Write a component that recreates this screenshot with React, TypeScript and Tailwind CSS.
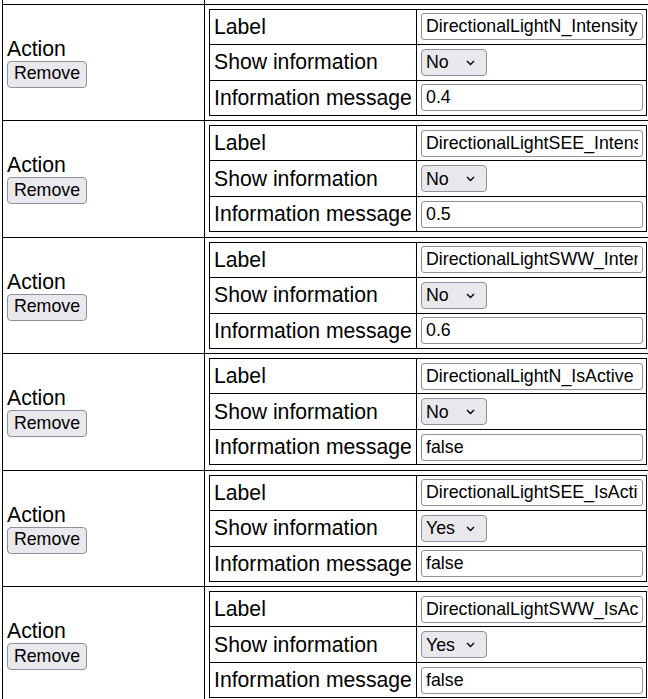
const rows = [
  { label: 'DirectionalLightN_Intensity', show: 'No', message: '0.4' },
  { label: 'DirectionalLightSEE_Intensity', show: 'No', message: '0.5' },
  { label: 'DirectionalLightSWW_Intensity', show: 'No', message: '0.6' },
  { label: 'DirectionalLightN_IsActive', show: 'No', message: 'false' },
  { label: 'DirectionalLightSEE_IsActive', show: 'Yes', message: 'false' },
  { label: 'DirectionalLightSWW_IsActive', show: 'Yes', message: 'false' },
]

function TextInput({ value }: { value: string }) {
  return (
    <input
      type="text"
      defaultValue={value}
      className="block w-[222px] h-[27px] px-[4px] border border-[#8f8f9d] rounded-[3px] bg-white text-[17.8px] text-black outline-none"
    />
  )
}

function YesNo({ value }: { value: string }) {
  return (
    <span className="relative inline-block align-middle">
      <select
        defaultValue={value}
        className="block appearance-none w-[66px] h-[27px] pl-[4px] pr-[20px] border border-[#8f8f9d] rounded-[4px] bg-[#e9e9ed] text-[17.8px] text-black outline-none"
      >
        <option>Yes</option>
        <option>No</option>
      </select>
      <svg
        className="pointer-events-none absolute right-[12px] top-[11px]"
        width="9"
        height="6"
        viewBox="0 0 9 6"
        fill="none"
      >
        <polyline points="1,1 4.5,4.5 8,1" stroke="#000" strokeWidth="1.4" />
      </svg>
    </span>
  )
}

export default function App() {
  return (
    <div className="w-[648px] h-[699px] overflow-hidden bg-white text-black font-['Liberation_Sans',Arial,sans-serif] text-[21.2px] leading-[24px]">
      <table className="ml-[2px] w-[649px] table-fixed border-collapse">
        <colgroup>
          <col className="w-[202px]" />
          <col className="w-[447px]" />
        </colgroup>
        <tbody>
          <tr>
            <td className="h-[4px] p-0 border-x border-b border-black" />
            <td className="h-[4px] p-0 border-x border-b border-black" />
          </tr>
          {rows.map((r) => (
            <tr key={r.label}>
              <td className="border border-black px-[4px] align-middle">
                <div>Action</div>
                <button
                  type="button"
                  className="block w-[80px] h-[27px] border border-[#8f8f9d] rounded-[4px] bg-[#e9e9ed] text-[17.8px] leading-none text-black"
                >
                  Remove
                </button>
              </td>
              <td className="border border-black px-[4px] py-[4.25px]">
                <table className="w-[437px] table-fixed border-collapse">
                  <colgroup>
                    <col className="w-[207px]" />
                    <col className="w-[230px]" />
                  </colgroup>
                  <tbody>
                    <tr>
                      <td className="h-[35px] border border-black px-[4px] whitespace-nowrap">Label</td>
                      <td className="h-[35px] border border-black px-[4px]">
                        <TextInput value={r.label} />
                      </td>
                    </tr>
                    <tr>
                      <td className="h-[36px] border border-black px-[4px] whitespace-nowrap">Show information</td>
                      <td className="h-[36px] border border-black px-[4px]">
                        <YesNo value={r.show} />
                      </td>
                    </tr>
                    <tr>
                      <td className="h-[35px] border border-black px-[4px] whitespace-nowrap">Information message</td>
                      <td className="h-[35px] border border-black px-[4px]">
                        <TextInput value={r.message} />
                      </td>
                    </tr>
                  </tbody>
                </table>
              </td>
            </tr>
          ))}
        </tbody>
      </table>
    </div>
  )
}
